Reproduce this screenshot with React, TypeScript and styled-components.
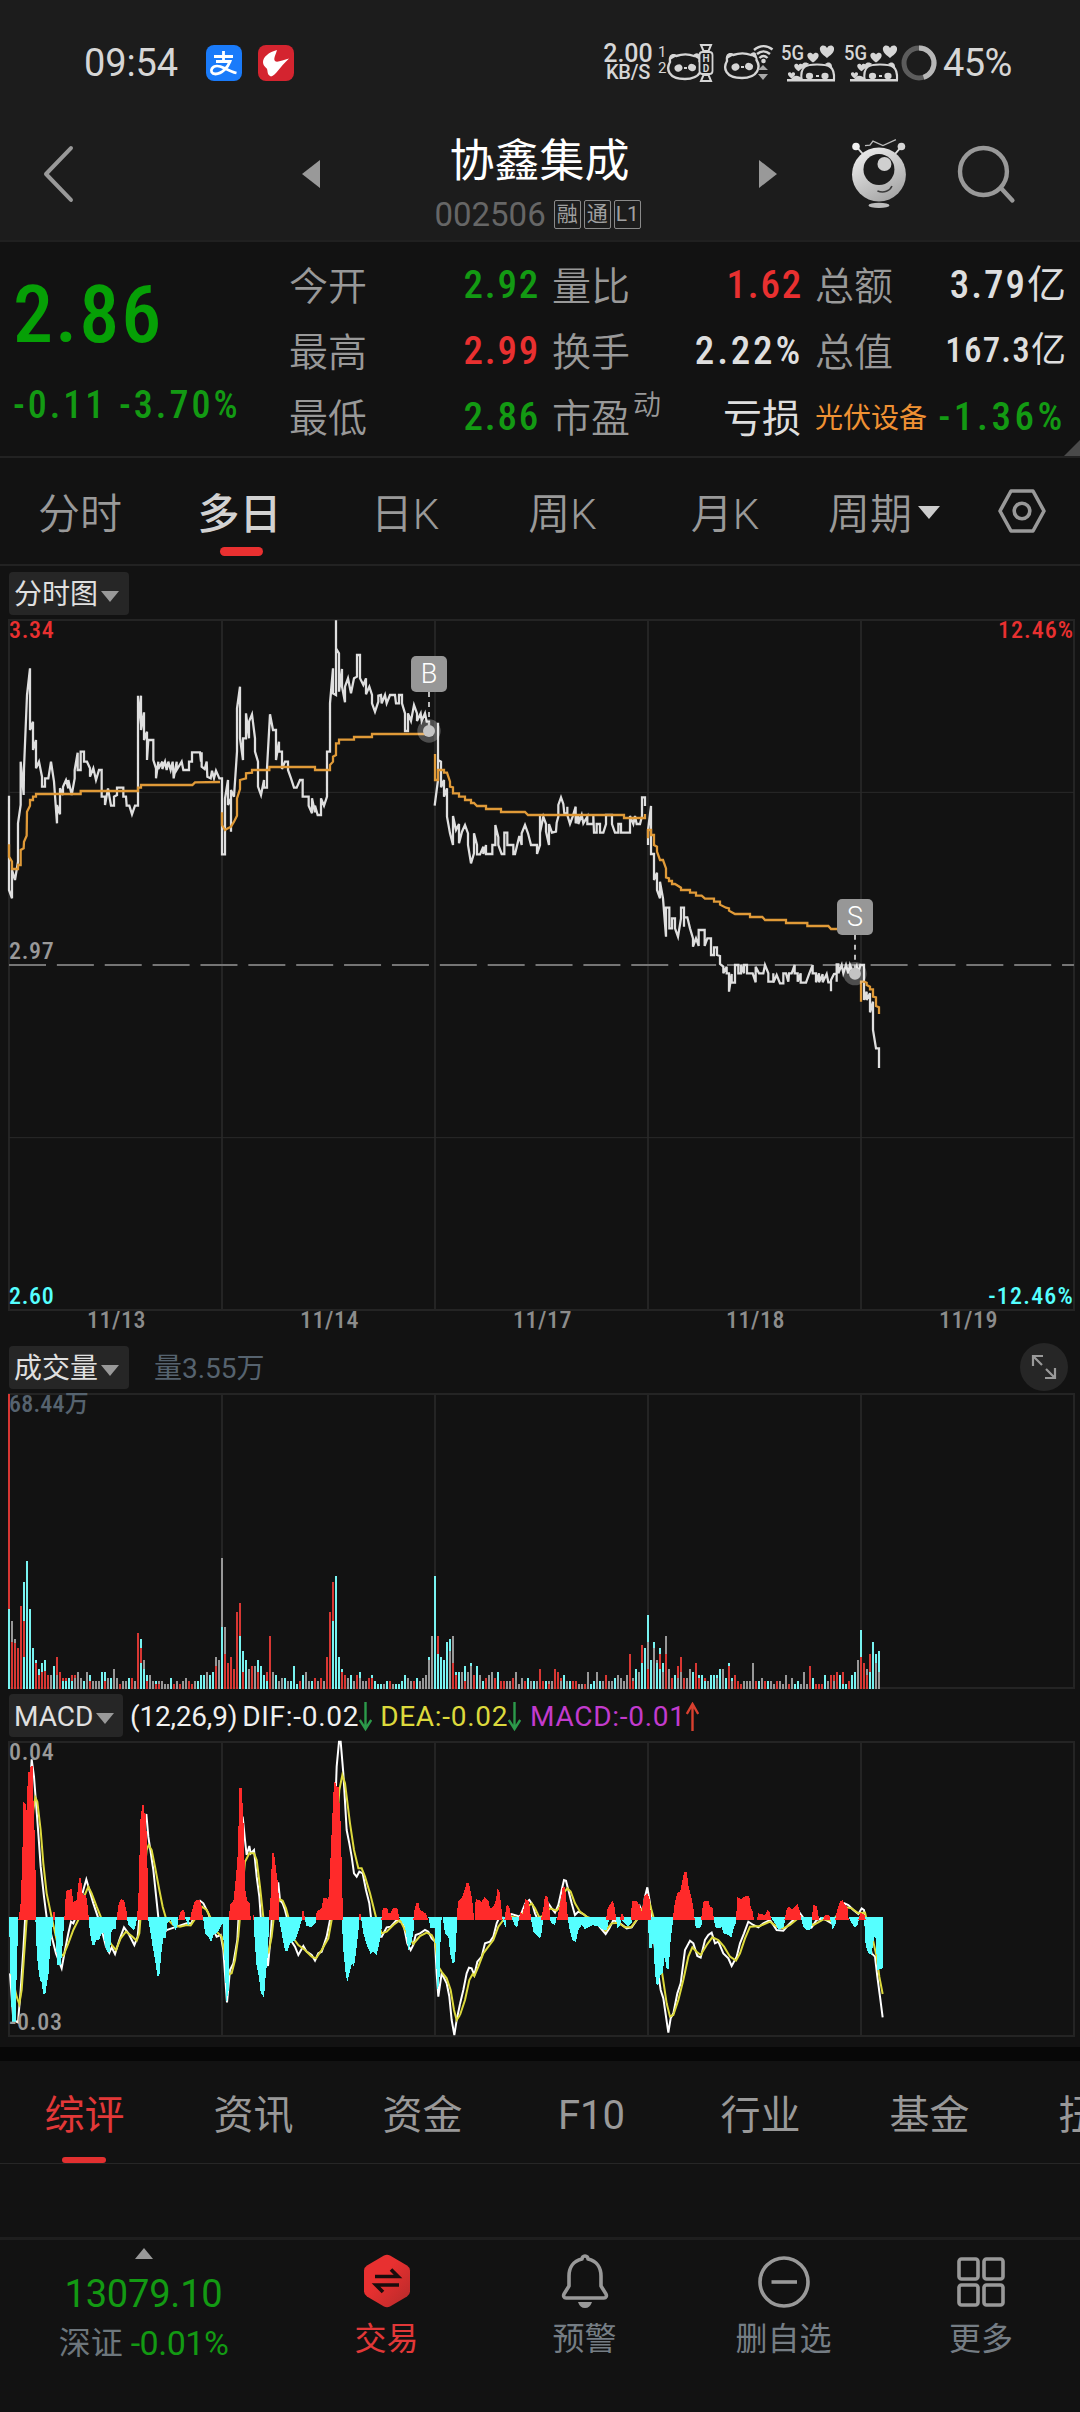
import styled, { createGlobalStyle } from 'styled-components';

const GlobalStyle = createGlobalStyle`
  * {
    box-sizing: border-box;
  }

  body {
    margin: 0;
    background: #121212;
    font-family: Roboto, "Noto Sans CJK SC", sans-serif;
  }
`;

const COLORS = {
  up: '#e93030',
  down: '#139a13',
  plain: '#dedede',
  muted: '#999999',
  slate: '#56636f',
  cyan: '#55ffff',
  grid: '#242424',
  average: '#e09a38',
};

const Screen = styled.div`
  width: 1080px;
  height: 2412px;
  overflow: hidden;
  background: #121212;
  color: ${COLORS.muted};
`;

/* ---------- status bar ---------- */

const StatusBar = styled.div`
  display: flex;
  align-items: center;
  height: 124px;
  padding: 1px 67px 0 84px;
  background: #1c1c1c;
  color: #d6d6d6;
`;

const Clock = styled.span`
  width: 122px;
  font-size: 38px;
  line-height: 50px;
  letter-spacing: -0.1px;
`;

const AppIcons = styled.div`
  display: flex;
  gap: 16px;
`;

const StatusIcons = styled.div`
  display: flex;
  align-items: center;
  margin-left: auto;

  > svg {
    flex: none;
    overflow: visible;
  }
`;

const NetSpeed = styled.div`
  width: 52px;
  font-size: 25px;
  font-weight: 500;
  line-height: 19px;
  text-align: center;

  > small {
    display: block;
    font-size: 20px;
    line-height: 18px;
    letter-spacing: -0.3px;
  }
`;

const Battery = styled.span`
  margin-left: 6px;
  width: 70px;
  font-size: 38px;
  line-height: 48px;
  letter-spacing: -0.6px;
`;

/* ---------- title bar ---------- */

const TitleBar = styled.header`
  display: flex;
  align-items: center;
  height: 118px;
  padding: 0 63px 16px 42px;
  background: #1c1c1c;
  border-bottom: 2px solid #202020;
`;

const TitleBlock = styled.div`
  display: flex;
  flex-direction: column;
  align-items: center;
  width: 440px;
  padding-top: 27px;
`;

const StockName = styled.h1`
  margin: 0;
  color: #fff;
  font-size: 45px;
  font-weight: 400;
  line-height: 54px;
`;

const StockMeta = styled.div`
  display: flex;
  align-items: center;
  gap: 3px;
  height: 52px;
  padding-right: 4px;
  color: #666;
  font-size: 33px;
  line-height: 40px;

  > b {
    margin-right: 5px;
    font-weight: 400;
  }
`;

const MetaBadge = styled.span`
  display: flex;
  align-items: center;
  justify-content: center;
  width: 27px;
  height: 29px;
  border: 1px solid #8a8a8a;
  border-radius: 2px;
  color: #a0a0a0;
  font-size: 21px;
  line-height: 27px;
`;

const Spacer = styled.div<{ $width: number }>`
  flex: none;
  width: ${({ $width }) => $width}px;
`;

/* ---------- quote ---------- */

const Quote = styled.section`
  position: relative;
  display: flex;
  height: 216px;
  border-bottom: 2px solid #222;
`;

const PriceBlock = styled.div`
  width: 289px;
  padding: 32px 0 0 13px;
`;

const Price = styled.div`
  color: #06a006;
  font-size: 80px;
  font-weight: 500;
  font-stretch: 75%;
  line-height: 82px;
  letter-spacing: 2px;
`;

const Change = styled.div`
  margin-top: 27px;
  color: ${COLORS.down};
  font-size: 38px;
  font-weight: 500;
  font-stretch: 75%;
  line-height: 44px;
  letter-spacing: 3px;
  white-space: nowrap;
`;

const QuoteGrid = styled.div`
  display: grid;
  grid-template-columns: repeat(3, 249px);
  grid-auto-rows: 66px;
  column-gap: 14px;
  padding-top: 12px;
`;

const QuoteCell = styled.div`
  display: flex;
  align-items: center;
  justify-content: space-between;
  line-height: 60px;
  white-space: nowrap;
`;

const QuoteLabel = styled.span<{ $sector?: boolean }>`
  color: ${({ $sector }) => ($sector ? '#ef9133' : COLORS.muted)};
  font-size: ${({ $sector }) => ($sector ? 28 : 39)}px;
  font-weight: ${({ $sector }) => ($sector ? 400 : 350)};

  > sup {
    position: relative;
    top: -3px;
    left: 3px;
    font-size: 28px;
    line-height: 0;
    vertical-align: 14px;
  }
`;

const QuoteValue = styled.span<{ $color: string; $small?: boolean; $text?: boolean; $spacing: number }>`
  margin-right: ${({ $text }) => ($text ? 0 : -2)}px;
  margin-bottom: ${({ $text }) => ($text ? 0 : 5)}px;
  color: ${({ $color }) => $color};
  font-size: ${({ $small }) => ($small ? 35 : 39)}px;
  font-weight: 500;
  font-stretch: 75%;
  letter-spacing: ${({ $spacing }) => $spacing}px;

  > i {
    font-style: normal;
    font-weight: 400;
    letter-spacing: 0;
  }
`;

const Corner = styled.div`
  position: absolute;
  right: 0;
  bottom: 0;
  border: 8px solid transparent;
  border-right-color: #4a4a4a;
  border-bottom-color: #4a4a4a;
`;

/* ---------- period tabs ---------- */

const PeriodTabs = styled.nav`
  display: grid;
  grid-template-columns: 160px 159px 172px 143px 182px 136px 128px;
  height: 108px;
  border-bottom: 2px solid #222;
`;

const PeriodTab = styled.div<{ $active?: boolean }>`
  position: relative;
  display: flex;
  align-items: center;
  justify-content: center;
  gap: 6px;
  padding-top: 8px;
  color: ${({ $active }) => ($active ? '#d2d2d2' : COLORS.muted)};
  font-size: 42px;
  font-weight: ${({ $active }) => ($active ? 500 : 350)};
  line-height: 60px;
  white-space: nowrap;

  &::after {
    content: ${({ $active }) => ($active ? "''" : 'none')};
    position: absolute;
    bottom: 8px;
    left: 60px;
    width: 43px;
    height: 9px;
    border-radius: 5px;
    background: #e93030;
  }
`;

const Caret = styled.span<{ $color?: string; $size?: number }>`
  width: 0;
  height: 0;
  margin-bottom: ${({ $size }) => ($size ? 6 : -3)}px;
  border: ${({ $size = 9 }) => $size}px solid transparent;
  border-top: ${({ $size = 9 }) => $size + 2}px solid ${({ $color = '#999' }) => $color};
  border-bottom: 0;
`;

const SettingsCell = styled.div`
  display: flex;
  align-items: center;
  justify-content: center;
  padding-left: 12px;
`;

/* ---------- charts ---------- */

const ChartHeader = styled.div<{ $height: number; $top: number }>`
  display: flex;
  align-items: flex-start;
  height: ${({ $height }) => $height}px;
  padding: ${({ $top }) => $top}px 12px 0 9px;
`;

const Chip = styled.div<{ $width: number }>`
  display: flex;
  align-items: center;
  gap: 3px;
  width: ${({ $width }) => $width}px;
  height: 43px;
  padding: 3px 0 0 5px;
  border-radius: 4px;
  background: #262626;
  color: #e0e0e0;
  font-size: 28px;
  line-height: 42px;
  white-space: nowrap;
`;

const VolumeText = styled.span`
  margin-left: 25px;
  color: ${COLORS.slate};
  font-size: 28px;
  line-height: 46px;
`;

const ExpandButton = styled.div`
  display: flex;
  align-items: center;
  justify-content: center;
  width: 48px;
  height: 48px;
  margin: -3px 0 0 auto;
  border-radius: 50%;
  background: #262626;
`;

const Plot = styled.div<{ $height: number }>`
  position: relative;
  width: 1065px;
  height: ${({ $height }) => $height}px;
  margin-left: 9px;

  > svg {
    display: block;
    overflow: visible;
  }
`;

const AxisLabel = styled.span<{ $top: number; $right?: boolean; $color: string; $spacing?: number }>`
  position: absolute;
  top: ${({ $top }) => $top}px;
  ${({ $right }) => ($right ? 'right: 0;' : 'left: 0;')}
  color: ${({ $color }) => $color};
  font-size: 24px;
  font-weight: 500;
  font-stretch: 75%;
  letter-spacing: ${({ $spacing = 0.7 }) => $spacing}px;
  line-height: 20px;
  white-space: nowrap;
`;

const TradeMark = styled.div<{ $x: number; $y: number }>`
  position: absolute;
  left: ${({ $x }) => $x - 18}px;
  top: ${({ $y }) => $y}px;
  width: 36px;
  height: 36px;
  border-radius: 5px;
  background: #979797;
  color: #fff;
  font-size: 27px;
  font-weight: 300;
  line-height: 36px;
  text-align: center;
`;

const Dates = styled.div`
  display: grid;
  grid-template-columns: repeat(5, 213px);
  height: 30px;
  padding-left: 10px;
  color: #8c8c8c;
  font-size: 24px;
  font-weight: 500;
  font-stretch: 75%;
  letter-spacing: 0.5px;
  line-height: 20px;
  text-align: center;
`;

const Indicator = styled.span<{ $color: string; $gap: number; $spacing?: number }>`
  display: flex;
  align-items: center;
  margin-left: ${({ $gap }) => $gap}px;
  color: ${({ $color }) => $color};
  font-size: 28px;
  line-height: 45px;
  letter-spacing: ${({ $spacing = 0 }) => $spacing}px;
  white-space: nowrap;
`;

const Gap = styled.div`
  height: 14px;
  margin-top: 11px;
  background: #070707;
`;

/* ---------- bottom ---------- */

const InfoTabs = styled.nav`
  display: grid;
  grid-template-columns: repeat(7, 169px);
  width: 1080px;
  height: 103px;
  overflow: hidden;
  border-bottom: 1px solid #262626;
`;

const InfoTab = styled.div<{ $active?: boolean }>`
  position: relative;
  width: 169px;
  padding-top: 23px;
  color: ${({ $active }) => ($active ? '#e23838' : COLORS.muted)};
  font-size: 40px;
  font-weight: 400;
  line-height: 64px;
  text-align: center;

  &::after {
    content: ${({ $active }) => ($active ? "''" : 'none')};
    position: absolute;
    bottom: 0;
    left: 62px;
    width: 44px;
    height: 6px;
    border-radius: 3px;
    background: #e23030;
  }
`;

const Blank = styled.div`
  height: 73px;
`;

const BottomBar = styled.footer`
  display: grid;
  grid-template-columns: 287px 199px 197px 201px 194px;
  height: 175px;
  border-top: 3px solid #1e1e1e;
`;

const IndexBlock = styled.div`
  display: flex;
  flex-direction: column;
  align-items: center;
  padding-top: 8px;
`;

const CaretUp = styled.span`
  border: 9px solid transparent;
  border-top: 0;
  border-bottom: 11px solid #999;
`;

const IndexValue = styled.div`
  margin-top: 13px;
  color: #139a13;
  font-size: 38px;
  line-height: 44px;
  letter-spacing: -0.2px;
`;

const IndexChange = styled.div`
  display: flex;
  gap: 8px;
  color: #6d767c;
  font-size: 32px;
  line-height: 54px;

  > b {
    color: #139a13;
    font-size: 34px;
    font-weight: 400;
    letter-spacing: -0.5px;
  }
`;

const Action = styled.div<{ $active?: boolean }>`
  display: flex;
  flex-direction: column;
  align-items: center;
  padding-top: 14px;
  color: ${({ $active }) => ($active ? '#e23838' : '#757d84')};
  font-size: 32px;
  line-height: 54px;

  > svg {
    margin-bottom: 4px;
  }
`;

/* ---------- series ---------- */

type Segment = { dx: number; dy: number; points: string };

// plot units: three per pixel
const UNIT = 3;

const priceSegments: Segment[] = [
  {
    dx: -27,
    dy: -165,
    points:
      '27,692 27,975 36,1000 36,915 45,945 54,890 54,775 62,720 62,590 71,690 72,610 81,390 90,310 90,495 99,470 99,555 108,525 108,610 117,590 126,635 126,665 135,665 135,640 145,640 153,590 162,650 171,775 171,720 180,748 180,670 189,690 189,665 198,645 205,670 205,645 215,690 224,640 224,615 233,563 233,615 242,615 242,560 252,560 252,590 261,590 270,610 270,635 280,610 288,645 297,615 305,615 305,695 315,695 315,720 324,670 333,722 342,722 342,695 351,690 351,668 370,668 370,695 378,695 380,722 388,722 396,748 405,722 414,722 414,392 414,480 423,392 423,495 432,442 432,525 441,500 441,585 445,525 460,525 460,585 468,610 468,640 475,590 475,612 487,590 487,612 495,590 500,615 505,590 512,615 518,590 521,640 530,590 530,615 545,590 550,615 567,615 567,590 576,590 576,562 600,562 603,590 605,562 605,605 614,612 620,590 622,635 632,640 636,617 642,640 648,617 658,640 666,640 666,868 675,868 675,700 684,645 684,720 693,700 693,800 693,675 702,695 711,560 711,430 720,365 720,520 729,585 729,520 738,520 738,445 747,520 747,470 756,448 765,520 765,560 774,590 774,665 783,690 792,645 792,668 801,668 801,610 810,448 819,495 828,495 828,585 837,530 837,560 846,560 846,612 855,590 864,590 864,615 873,640 882,668 890,668 900,645 908,645 908,695 926,695 926,722 936,745 936,700 945,742 945,722 953,750 963,750 963,700 972,722 981,695 981,560 990,560 990,415 999,310 999,385 1008,390 1008,166 1008,250 1017,265 1017,380 1026,312 1026,365 1035,412 1035,365 1044,340 1053,385 1062,340 1071,335 1071,270 1080,270 1080,340 1090,360 1098,340 1098,388 1108,365 1116,390 1116,415 1125,440 1135,410 1135,392 1143,390 1145,415 1155,390 1160,415 1170,390 1185,390 1188,415 1197,415 1197,390 1206,390 1206,415 1215,445 1215,498 1224,498 1224,445 1233,468 1242,420 1251,445 1251,468 1262,445 1265,468 1275,445 1280,470 1287,470 1287,495',
  },
  {
    dx: 873,
    dy: -60,
    points:
      '404,617 414,540 414,368 414,480 423,485 423,562 432,540 432,590 441,565 441,650 450,700 459,735 459,648 468,690 477,672 477,730 486,695 495,675 504,700 504,735 513,790 522,760 522,700 531,735 531,763 540,763 550,740 550,762 558,735 558,762 577,762 577,735 586,735 586,675 595,712 595,735 605,762 613,762 613,698 622,698 622,735 640,735 640,762 645,762 658,708 665,735 665,700 675,675 684,700 693,735 711,735 711,762 720,735 720,648 720,698 730,650 738,672 738,695 747,735 747,672 756,698 768,695 770,668 775,650 775,615 783,592 790,612 793,640 802,640 802,620 802,645 810,672 818,650 827,620 827,670 835,645 835,672 845,645 850,670 862,650 862,672 880,672 880,648 882,698 890,698 890,672 900,672 900,698 910,698 918,672 918,645 936,645 936,672 945,698 955,698 955,672 963,672 963,698 990,698 990,648 1000,672 1005,648 1010,672 1020,672 1026,648 1026,592 1035,592 1035,618',
  },
  {
    dx: 1833,
    dy: 480,
    points:
      '84,195 84,150 93,78 93,222 102,222 102,300 111,278 111,330 120,355 120,305 129,355 138,470 138,383 148,383 148,445 156,445 156,415 165,415 165,445 174,470 183,415 183,383 192,383 192,440 192,412 202,412 210,445 219,475 219,500 228,475 236,498 236,450 254,450 254,498 262,475 273,475 273,525 282,525 282,502 291,502 291,525 300,528 300,552 310,560 310,580 320,560 320,580 327,580 327,635 335,582 335,608 345,608 345,555 355,555 355,580 363,580 363,555 372,580 372,555 381,555 381,580 398,580 407,607 407,560 417,580 430,580 435,555 445,580 445,605 460,605 460,580 460,608 470,585 480,610 490,610 490,580 498,580 505,605 507,580 515,580 524,555 524,580 533,580 533,605 542,580 542,608 558,608 568,580 578,555 578,580 588,580 588,607 597,580 597,607 608,583 608,607 620,582 625,607 633,607 633,634 633,600 642,582 650,580 650,605 650,553 655,553 655,580 665,555 670,580 678,555 685,580 690,555 700,580 710,558 715,580 721,555 732,555 732,660 740,635 740,660 750,640 750,697 759,665 759,750 768,805 777,805 777,864',
  },
];

const averageSegments: Segment[] = [
  {
    dx: -27,
    dy: -165,
    points:
      '27,838 27,875 36,890 36,912 54,912 54,900 62,900 62,855 71,850 72,830 80,812 81,740 90,722 90,705 99,705 99,695 108,695 108,687 242,687 242,678 414,678 414,668 423,668 423,660 577,660 585,652 660,651',
  },
  {
    dx: -27,
    dy: -165,
    points:
      '666,742 666,780 675,795 684,790 693,785 702,770 711,752 711,700 720,672 720,645 738,640 738,625 756,623 756,615 808,615 808,606 945,606 945,615 990,615 990,600 999,590 999,575 1008,570 1008,535 1017,535 1017,524 1062,524 1062,516 1116,516 1116,507 1287,507',
  },
  {
    dx: 873,
    dy: -60,
    points:
      '405,462 405,540 414,540 414,510 432,510 432,518 441,518 450,545 450,560 459,562 459,580 477,580 477,590 495,590 495,600 513,600 513,609 522,609 531,618 558,618 558,627 603,627 603,636 675,636 684,645 972,645 972,654 1035,654 1035,642',
  },
  {
    dx: 1833,
    dy: 480,
    points:
      '84,175 84,150 93,150 93,165 102,165 102,195 111,200 111,215 120,240 129,240 138,265 138,292 147,295 147,303 156,303 156,312 165,312 183,323 183,330 210,330 210,338 228,338 228,347 245,347 255,356 282,356 282,365 300,365 300,374 318,383 327,385 327,392 345,402 390,402 390,411 427,411 435,420 498,420 498,429 562,429 562,438 625,438 633,447 652,447',
  },
  {
    dx: 1833,
    dy: 480,
    points: '723,665 723,605 732,605 740,608 740,615 750,620 750,628 759,628 759,650 768,652 768,678 777,682 777,702',
  },
];

// one token per bar, tallest layer first: r = up, c = down, g = flat
const volumeBars =
  'r295c80 g68r47 g50r46 r41 r83 c107r68c32 c128 c80 c41 c29r26 c20r14 c26r17 c29r18 r14 g14 c23 r32g14 r17 r11c8 r11c8 c11 r14c8 r14g11 g17 g11 c8 g17 c14r8 g8 g8 g8 c17 c17r8 g11 c11 g20 g11 r5 g8 g8 c11 r11 g8 r56 c50r41c26 g29c20 c14r8 g14 g8 c8r5 g8r5 g8 g5 g5 c11 r5 g8 r5 g8 g11 r8 r5 g8 c8 c14 c14 g17 c14 c17 g32r23 g29 g131c62 g62r35 r26 r32 r20 r77 r86c53 c38r17 c29 g20 r23 g23 c29r17 c23 c14 r17c8 r53 g17 c14 g8 g11 c11 g8 c8 c23 c5 r8 c14 g17 g8 c8 r11 g8 r11 g8 r32 r77 r107c68 c113 c32 c20r17 r14 g11 c14 g8 r14 c17g11 g8 g8 r11 c14r11 c8 c5 c5 g5 c8 r8 g5 c5 c5 c8 c14 g11 g8 r8 c11 g8 g11 g14 c32g29 g53 c113 r53c35 c32 c29 c47 c50g38 g53r26 c17r14 c17 g17 c23r8 g17 c26g23 r14 c23 g14 c8 r11 g14 g17 r11 c17 r8 r8 g8 g8 r11 g17 g5 g11 r8 c11 g8 c8 g8 r20 r8 c8 g8r5 g8 r20 r17 r11g8 c14 g8 c8 r8 r8 g5 g5 r5 g17 c5 c8 g17 c8 g8 r14 g8 g8 c11 g14 g11 g8 g14 r35 g11r8 c20 g17 r44c26 c41 c74g47r20 c29 c47g41 g29c26 c41r35c20 c26g17 g53r35 g20 r11 c14 r23g11 r32g17 r11 g11 g20 c17 r26 c14r11 c14 r11c8 g8 c14 c14 c14g11 c20 g20 c11 c26r23 c11g8 r14 r8 r5 g8 g8 g8 g26 r8 c8 g11 r8 c8 g8 g5 r8 g8 g5 g14 r5 g11 c5 c8 g5 g17 g5 r23 c11 r5 r5 r5 c14 g8 r14 r14g8 r17 c14 r17c5 c5 r8 c14 c17 g29 c59r32 r26 g20r14 r35c17 c47 c35g26 c38g17';

const volumeColors: Record<string, string> = { r: '#d83733', c: '#78f3f1', g: '#989898' };

const positive: Segment[] = [
  {
    dx: -27,
    dy: -156,
    points:
      '55,690 62,640 67,500 70,335 76,340 80,362 84,245 90,245 92,228 98,228 100,320 103,400 108,600 108,690 160,690 160,666 165,666 165,690 193,690 195,640 200,600 215,598 220,635 230,630 237,565 243,565 248,615 258,615 265,660 266,690 350,690 355,645 362,628 372,630 380,665 382,690 411,690 416,600 421,390 427,345 432,345 433,370 438,372 442,500 445,690 535,690 540,670 546,660 553,662 556,690 570,690 575,665 582,640 588,630 600,630 605,650 609,690 686,690 690,645 700,635 708,560 714,480 718,295 725,295 730,380 736,600 741,632 750,640 752,690 758,690 758,675 762,675 762,690 806,690 812,620 816,488 822,490 835,590 838,690 905,690 908,660 913,665 914,690 947,690 950,665 965,655 970,625 978,622 985,630 990,540 996,400 1002,277 1007,278 1010,290 1016,292 1022,400 1027,600 1029,690 1078,690 1078,672 1083,672 1083,690 1144,690 1148,655 1162,655 1165,668 1172,668 1178,655 1192,655 1196,675 1197,690 1240,690 1244,655 1250,637 1256,640 1260,660 1278,670 1285,690',
  },
  {
    dx: 1293,
    dy: -156,
    points:
      '50,690 54,635 65,625 72,605 80,578 87,580 95,620 100,660 102,690 104,690 107,628 118,630 125,635 133,622 145,632 150,655 160,650 168,630 172,598 178,600 184,650 187,690 193,690 200,645 207,648 212,670 217,690 237,690 240,665 248,672 256,628 265,630 270,655 273,690 303,690 310,655 315,617 322,618 328,650 330,690 350,690 355,670 362,630 368,592 375,592 380,640 384,690 498,690 503,655 512,640 518,632 525,655 528,690 540,690 543,672 550,672 552,690 572,690 576,632 590,632 598,645 605,665 612,620 622,610 630,630 633,690 698,690 704,640 712,608 720,605 726,580 732,545 740,545 746,590 754,620 762,665 764,690 783,690 790,635 805,632 810,650 817,650 822,690 888,690 892,622 905,628 912,620 928,618 932,650 938,665 942,690 950,690 955,670 975,675 982,660 990,668 993,690 1033,690 1040,658 1048,650 1056,660 1065,650 1072,640 1080,665 1084,690 1115,690 1120,645 1130,648 1136,680 1137,690 1150,690 1155,675 1168,675 1170,690 1185,690 1192,658 1200,635 1208,630 1215,645 1222,650 1226,690 1255,690 1262,668 1275,675 1277,690',
  },
];

const negative: Segment[] = [
  {
    dx: -27,
    dy: -156,
    points:
      '27,682 30,800 34,935 36,997 47,997 50,850 55,690 55,682 106,682 110,780 114,830 120,870 127,880 128,913 136,913 140,885 146,850 150,780 155,740 160,682 163,682 168,760 172,825 182,825 186,790 192,700 194,682 266,682 270,730 277,765 283,765 290,750 297,750 303,735 310,725 315,765 322,787 330,787 335,720 348,715 350,682 380,682 385,705 395,715 402,722 408,705 411,682 444,682 450,720 458,770 466,815 472,858 478,858 484,790 490,745 497,745 502,700 512,690 518,705 527,720 533,705 535,682 555,682 560,695 565,708 570,682 609,682 615,730 625,740 633,757 640,735 655,725 665,705 668,700 674,820 679,935 686,900 688,690 688,682 760,682 766,780 770,830 777,860 782,908 792,922 797,860 803,800 808,682 836,682 845,730 855,783 863,783 870,760 885,752 895,725 905,690 905,682 912,682 920,708 935,712 947,700 948,682 1025,682 1030,780 1038,860 1043,875 1048,850 1056,820 1062,832 1070,770 1078,700 1079,682 1083,682 1090,730 1100,765 1112,792 1120,785 1130,795 1138,760 1144,730 1146,682 1197,682 1215,710 1225,780 1235,755 1242,715 1243,682 1285,682 1292,715 1305,715 1308,800 1312,900 1318,880 1322,740 1325,682 1328,682 1335,730 1345,740 1352,800 1358,820 1365,815 1370,720 1372,682',
  },
  {
    dx: 1293,
    dy: -156,
    points:
      '187,682 192,700 197,712 200,682 215,682 225,708 232,712 238,682 272,682 280,725 290,735 298,745 303,740 308,700 309,682 327,682 335,700 345,705 350,682 383,682 390,725 398,752 408,755 415,720 425,705 435,718 445,712 458,705 475,710 490,720 500,720 505,700 508,682 527,682 533,715 540,705 545,690 565,710 575,700 577,682 624,682 627,775 635,775 640,750 645,850 650,885 655,885 660,855 668,850 674,800 680,838 686,838 692,750 698,700 699,682 762,682 768,715 780,715 787,700 788,682 819,682 828,715 845,712 850,730 865,735 875,742 882,710 888,700 889,682 993,682 1005,700 1015,720 1030,712 1036,690 1036,682 1083,682 1090,712 1100,722 1112,718 1117,700 1118,682 1140,682 1145,692 1150,682 1170,682 1178,718 1188,700 1190,682 1226,682 1235,700 1245,712 1253,705 1258,682 1272,682 1277,765 1285,790 1295,795 1302,740 1307,745 1312,840 1328,835 1330,682',
  },
];

const dif: Segment[] = [
  {
    dx: -27,
    dy: -156,
    points:
      '30,850 40,990 54,997 62,900 70,780 78,640 84,400 95,208 102,260 115,430 122,530 132,620 140,682 150,720 168,790 185,835 195,780 205,730 213,695 220,700 235,660 250,600 259,568 268,600 280,640 290,670 300,700 318,770 328,788 335,772 345,792 358,750 372,712 385,730 403,765 413,740 425,600 433,400 439,372 445,440 460,540 475,682 485,740 500,720 530,710 560,700 575,700 590,640 600,632 610,640 625,670 640,720 650,740 662,735 670,780 681,937 690,840 700,820 712,750 720,600 728,380 735,450 740,495 748,468 752,490 762,480 770,560 778,620 783,690 790,800 800,800 804,828 812,740 818,640 825,580 835,580 840,630 848,640 855,660 865,700 875,755 885,770 895,795 910,768 920,785 935,795 945,812 955,790 965,785 980,740 990,690 1000,520 1010,230 1017,155 1022,155 1030,250 1040,420 1048,460 1055,500 1062,550 1070,560 1078,545 1088,550 1098,600 1108,640 1113,682 1125,740 1145,740 1160,712 1172,710 1190,690 1210,700 1222,760 1232,780 1240,765 1247,735 1260,730 1275,720 1285,725 1295,745 1305,755 1310,850 1315,920 1325,850 1340,880 1348,920 1355,990 1363,1035 1370,990 1380,942',
  },
  {
    dx: 1293,
    dy: -156,
    points:
      '60,942 70,900 80,850 87,833 95,835 103,855 112,815 125,800 135,760 150,755 160,740 170,700 178,682 200,685 215,672 240,680 256,640 268,630 278,645 285,670 298,700 310,680 325,640 335,655 345,668 355,645 365,600 372,570 378,572 385,600 395,640 405,675 415,665 430,672 445,685 465,690 480,712 497,732 508,715 520,690 540,700 560,715 575,712 590,690 600,650 608,670 615,620 622,592 630,640 638,720 650,820 662,900 670,925 685,1028 692,985 700,970 712,910 722,880 735,780 750,752 760,760 772,798 782,803 795,750 805,735 815,728 825,760 835,755 850,790 865,805 875,828 890,800 900,760 912,730 925,695 940,705 955,712 970,700 990,690 1010,720 1030,722 1045,705 1060,690 1080,670 1095,690 1115,712 1130,690 1150,685 1175,700 1195,670 1213,640 1225,645 1240,660 1255,672 1265,655 1272,660 1280,730 1295,790 1305,800 1312,860 1320,920 1328,982',
  },
];

const dea: Segment[] = [
  {
    dx: -27,
    dy: -156,
    points:
      '34,850 50,920 58,942 65,900 72,800 80,690 90,520 100,360 106,322 112,335 122,420 130,520 140,610 155,682 170,750 180,790 190,797 205,760 220,720 235,690 250,625 265,590 275,610 290,650 303,682 320,740 335,765 348,780 362,745 378,725 395,738 410,752 418,730 428,600 440,480 446,465 455,480 465,530 478,600 488,650 497,682 520,705 540,710 560,705 572,706 590,680 606,650 620,660 635,690 650,725 665,740 675,800 687,853 695,850 705,810 715,740 725,620 735,515 748,490 762,490 770,510 780,590 790,682 798,760 805,790 815,740 825,650 840,628 848,632 858,655 870,700 880,745 895,765 915,780 935,800 948,805 965,780 985,745 995,690 1005,500 1018,300 1027,255 1035,280 1050,400 1062,480 1075,535 1085,535 1095,560 1110,610 1128,682 1145,730 1160,725 1180,705 1200,690 1220,730 1240,762 1260,738 1280,728 1295,735 1305,755 1315,830 1326,847 1340,865 1352,900 1362,960 1370,990 1380,975',
  },
  {
    dx: 1293,
    dy: -156,
    points:
      '60,975 75,930 88,870 98,852 103,858 115,830 130,790 145,770 160,750 175,710 190,690 215,680 240,685 262,650 275,640 285,655 298,682 315,675 330,655 350,662 360,650 370,610 382,595 392,605 405,640 420,665 440,680 460,688 480,705 497,722 515,700 535,698 555,712 573,712 590,690 605,660 625,625 640,680 655,780 668,860 680,940 690,980 700,975 715,930 730,870 745,800 757,772 770,785 782,795 800,765 817,742 835,750 852,770 870,800 888,812 900,790 915,745 930,710 960,708 990,695 1010,710 1030,715 1050,705 1080,680 1100,695 1120,705 1150,688 1175,692 1200,670 1220,652 1235,655 1255,670 1275,668 1285,710 1300,755 1310,800 1318,860 1328,912',
  },
];

function Lines({ segments, color, width }: { segments: Segment[]; color: string; width: number }) {
  return (
    <>
      {segments.map(({ dx, dy, points }, i) => (
        <polyline
          key={i}
          points={points}
          transform={`translate(${dx} ${dy})`}
          fill="none"
          stroke={color}
          strokeWidth={width}
        />
      ))}
    </>
  );
}

function Areas({ segments, color }: { segments: Segment[]; color: string }) {
  return (
    <>
      {segments.map(({ dx, dy, points }, i) => (
        <polygon key={i} points={points} transform={`translate(${dx} ${dy})`} fill={color} shapeRendering="crispEdges" />
      ))}
    </>
  );
}

function Grid({ height }: { height: number }) {
  return (
    <g stroke={COLORS.grid} strokeWidth={6} fill="none">
      <rect x={0} y={0} width={3195} height={height * UNIT} />
      {[639, 1278, 1917, 2556].map((x) => (
        <path key={x} d={`M${x} 0V${height * UNIT}`} />
      ))}
    </g>
  );
}

function PriceChart() {
  return (
    <Plot $height={690}>
      <svg width={1065} height={690} viewBox="0 0 3195 2070">
        <Grid height={690} />
        <path d="M0 517H3195M0 1553H3195" stroke="#2a2a2a" strokeWidth={3} />
        <path d="M0 1035H3195" stroke="#757575" strokeWidth={6} strokeDasharray="111 32.6" />
        <Lines segments={priceSegments} color="#dfdfdf" width={6.8} />
        <Lines segments={averageSegments} color={COLORS.average} width={6.8} />
        {[
          [1260, 333],
          [2538, 1061],
        ].map(([x, y]) => (
          <g key={x}>
            <path d={`M${x} ${y - 117}V${y}`} stroke="#bbb" strokeWidth={6} strokeDasharray="15 15" />
            <circle cx={x} cy={y} r={35} fill="#fff" opacity={0.25} />
            <circle cx={x} cy={y} r={18} fill="#c4c4c4" />
          </g>
        ))}
      </svg>
      <AxisLabel $top={0} $color={COLORS.up}>3.34</AxisLabel>
      <AxisLabel $top={0} $color={COLORS.up} $right $spacing={1}>12.46%</AxisLabel>
      <AxisLabel $top={321} $color="#999">2.97</AxisLabel>
      <AxisLabel $top={666} $color={COLORS.cyan}>2.60</AxisLabel>
      <AxisLabel $top={666} $color={COLORS.cyan} $right $spacing={1.2}>-12.46%</AxisLabel>
      <TradeMark $x={420} $y={36}>B</TradeMark>
      <TradeMark $x={846} $y={279}>S</TradeMark>
    </Plot>
  );
}

function VolumeChart() {
  return (
    <Plot $height={294}>
      <svg width={1065} height={294} viewBox="0 0 3195 882">
        <Grid height={294} />
        <g shapeRendering="crispEdges">
          {volumeBars.split(' ').map((bar, i) =>
            (bar.match(/[rcg]\d+/g) ?? []).map((layer, j) => {
              const h = Number(layer.slice(1)) * UNIT;
              return <rect key={`${i}-${j}`} x={i * 9 - 3} y={885 - h} width={6} height={h} fill={volumeColors[layer[0]]} />;
            }),
          )}
        </g>
      </svg>
      <AxisLabel $top={0} $color={COLORS.slate} $spacing={0.2}>68.44万</AxisLabel>
    </Plot>
  );
}

function MacdChart() {
  return (
    <Plot $height={294}>
      <svg width={1065} height={294} viewBox="0 0 3195 882">
        <Grid height={294} />
        <Lines segments={dif} color="#ffffff" width={6} />
        <Lines segments={dea} color="#dcd93c" width={6} />
        <Areas segments={negative} color="#55ffff" />
        <Areas segments={positive} color="#ff2a2a" />
      </svg>
      <AxisLabel $top={0} $color="#999">0.04</AxisLabel>
      <AxisLabel $top={270} $color="#999">-0.03</AxisLabel>
    </Plot>
  );
}

/* ---------- icons ---------- */

function TrendArrow({ up }: { up?: boolean }) {
  return (
    <svg width={13} height={30} viewBox="0 0 13 30" fill="none" stroke={up ? '#d8402f' : '#2c9a4a'} strokeWidth={2.4}>
      <path d={up ? 'M6.5 29V2M0.8 12L6.5 2L12.2 12' : 'M6.5 0V27M0.8 18L6.5 27L12.2 18'} />
    </svg>
  );
}

function AlipayIcon() {
  return (
    <svg width={36} height={36} viewBox="0 0 36 36">
      <rect width={36} height={36} rx={8} fill="#1a7bfa" />
      <path
        d="M8 11.5H27M17.5 6V16M10 16.5H24C22 22 16 29 9.500 29C5.500 29 4.500 26 6 23.500C8 20.500 13 20.500 18 23C23 25.500 26 27 30.500 28"
        fill="none"
        stroke="#fff"
        strokeWidth={2.8}
      />
    </svg>
  );
}

function BrokerIcon() {
  return (
    <svg width={36} height={36} viewBox="0 0 36 36">
      <rect width={36} height={36} rx={8} fill="#d4242f" />
      <path d="M19 5C11 7 5 12 5 17C5 21 8 22 9 24C10 27 9 30 13 31.500C18 30 21 23 31 13.500C25 15 19 18 17 16C15 14 18 9 19 5Z" fill="#fff" />
    </svg>
  );
}

function PandaHead() {
  return (
    <>
      <path d="M3 17C2 9 7 10 9 11C15 9 22 9 27 11C30 8 34 10 32.500 16C37 23 34 34 18 34C1 34 -1 24 3 17Z" fill="none" stroke="#d6d6d6" strokeWidth={2.4} />
      <path d="M3 15C3 8 8 8 10 11ZM26 11C29 7 34 9 33 15Z" fill="#d6d6d6" />
      <ellipse cx={11.5} cy={23} rx={4} ry={3.6} fill="#d6d6d6" transform="rotate(-25 11.500 23)" />
      <ellipse cx={25} cy={22.5} rx={4} ry={3.6} fill="#d6d6d6" transform="rotate(25 25 22.500)" />
      <rect x={17} y={22} width={3} height={2} fill="#d6d6d6" />
    </>
  );
}

function PandaHdIcon() {
  return (
    <svg width={58} height={38} viewBox="0 0 58 38">
      <g fill="#d6d6d6" fontFamily="Roboto" fontSize={15}>
        <text x={1} y={13}>1</text>
        <text x={1} y={29}>2</text>
      </g>
      <g transform="translate(10 1)">
        <PandaHead />
      </g>
      <path d="M44 1H54L51.500 7H46.500ZM44 37H54L51.500 31H46.500Z" fill="none" stroke="#d6d6d6" strokeWidth={2} />
      <rect x={42.500} y={8} width={13} height={22} rx={3} fill="#1c1c1c" stroke="#d6d6d6" strokeWidth={1.800} />
      <g fill="#d6d6d6" fontFamily="Roboto" fontSize={10} fontWeight={700} textAnchor="middle">
        <text x={49} y={18}>H</text>
        <text x={49} y={27.5}>D</text>
      </g>
    </svg>
  );
}

function PandaWifiIcon() {
  return (
    <svg width={50} height={38} viewBox="0 0 50 38">
      <PandaHead />
      <path d="M28 -2H50V16H34Z" fill="#1c1c1c" />
      <g fill="none" stroke="#d6d6d6" strokeWidth={2.4}>
        <path d="M30 6C36 1 43 1 48.500 5.500" />
        <path d="M33 10C37 6.500 42 6.500 46 10" />
        <path d="M35.500 14C38 11.500 41 11.500 43.500 14" />
      </g>
      <circle cx={39.5} cy={17} r={2.300} fill="#d6d6d6" />
      <path d="M34 26H44L39 21Z M34 30H44L39 36Z" fill="#a8a8a8" />
    </svg>
  );
}

const HEART = 'M0 -3C-2 -7 -8 -6 -7 -1C-6.500 2 -3 4.500 0 7C3 4.500 6.500 2 7 -1C8 -6 2 -7 0 -3Z';

function PandaSignalIcon() {
  return (
    <svg width={63} height={38} viewBox="0 0 63 38">
      <g fill="#d6d6d6">
        <text x={0} y={16} fontFamily="Roboto" fontSize={21} fontWeight={500} textLength={23} lengthAdjust="spacingAndGlyphs">
          5G
        </text>
        <path d={HEART} transform="translate(46 7)" />
        <path d={HEART} transform="translate(32 13) scale(0.800)" />
        <path d={HEART} transform="translate(17.500 23) scale(0.600)" />
        <path d={HEART} transform="translate(10.500 31) scale(0.500)" />
        <path d="M6 35H54V37.500H6Z M10 36C12 30 18 31 22 35Z" />
        <ellipse cx={28.5} cy={32} rx={3.600} ry={3.200} />
        <ellipse cx={44} cy={32} rx={3.600} ry={3.200} />
        <rect x={35} y={31} width={3} height={2} />
        <path d="M20 25C20 17 26 18 28 20ZM44 20C47 17 52 18 51 25Z" />
      </g>
      <path d="M20.500 36C19 22 25 20.500 36 20.500C48 20.500 54 22 53 36" fill="none" stroke="#d6d6d6" strokeWidth={2.200} />
    </svg>
  );
}

// the last signal glyph runs right up to the ring
const Ring = styled.svg`
  margin-left: -6px;
`;

function BatteryRing() {
  return (
    <Ring width={36} height={36} viewBox="0 0 36 36" fill="none" strokeWidth={5}>
      <circle cx={18} cy={18} r={15} stroke="#5c5c5c" />
      <path d="M18 3A15 15 0 0 1 22.600 32.300" stroke="#b8b8b8" />
    </Ring>
  );
}

function RobotIcon() {
  return (
    <svg width={56} height={72} viewBox="0 0 56 72">
      <defs>
        <linearGradient id="robot" x1="0" y1="0" x2="0.600" y2="1">
          <stop offset="0" stopColor="#f4f4f4" />
          <stop offset="1" stopColor="#a8a8a8" />
        </linearGradient>
      </defs>
      <path d="M5 8L12 16M51 8L44 16" stroke="#ddd" strokeWidth={1.800} />
      <circle cx={5} cy={8.500} r={3.800} fill="#f0f0f0" />
      <circle cx={50.500} cy={8.500} r={3.800} fill="#d6d6d6" />
      <path d="M14 7.500L19 7L22 3L32 7.500L45 1.500" fill="none" stroke="#bbb" strokeWidth={1.300} />
      <circle cx={28} cy={36.500} r={27} fill="url(#robot)" />
      <circle cx={28} cy={31.500} r={15.500} fill="#1c1c1c" />
      <circle cx={33.500} cy={26} r={7} fill="#cfcfcf" />
      <path d="M26.500 53C33 55.500 39 53 41 48" fill="none" stroke="#3a3a3a" strokeWidth={1.500} />
      <ellipse cx={28} cy={67.500} rx={10.500} ry={2.600} fill="#bdbdbd" />
    </svg>
  );
}

function TradeIcon() {
  return (
    <svg width={50} height={54} viewBox="0 0 50 54">
      <defs>
        <linearGradient id="trade" x1="0" y1="0" x2="1" y2="1">
          <stop offset="0.400" stopColor="#e83030" />
          <stop offset="1" stopColor="#b52a2a" />
        </linearGradient>
      </defs>
      <path d="M22 1.500Q25 0 28 1.500L45 11.500Q48 13.500 48 16.500V37.500Q48 40.500 45 42.500L28 52.500Q25 54 22 52.500L5 42.500Q2 40.500 2 37.500V16.500Q2 13.500 5 11.500Z" fill="url(#trade)" />
      <path d="M13 22.500H36L29 15.500M37 31H14L21 38" fill="none" stroke="#1a0c0c" strokeWidth={3.600} />
    </svg>
  );
}

const quotes = [
  { label: '今开', value: '2.92', color: COLORS.down, spacing: 1.8 },
  { label: '量比', value: '1.62', color: COLORS.up, spacing: 1.8 },
  { label: '总额', value: '3.79', unit: '亿', color: COLORS.plain, spacing: 2 },
  { label: '最高', value: '2.99', color: COLORS.up, spacing: 1.8 },
  { label: '换手', value: '2.22%', color: COLORS.plain, spacing: 2.8 },
  { label: '总值', value: '167.3', unit: '亿', color: COLORS.plain, small: true, spacing: 1.2 },
  { label: '最低', value: '2.86', color: COLORS.down, spacing: 1.8 },
  { label: '市盈', sup: '动', value: '', unit: '亏损', color: COLORS.plain, spacing: 0 },
  { label: '光伏设备', value: '-1.36%', color: COLORS.down, sector: true, spacing: 3.6 },
];

const infoTabs = ['综评', '资讯', '资金', 'F10', '行业', '基金', '扭亏'];

export default function App() {
  return (
    <Screen>
      <GlobalStyle />
      <StatusBar>
        <Clock>09:54</Clock>
        <AppIcons>
          <AlipayIcon />
          <BrokerIcon />
        </AppIcons>
        <StatusIcons>
          <NetSpeed>
            2.00
            <small>KB/S</small>
          </NetSpeed>
          <Spacer $width={3} />
          <PandaHdIcon />
          <Spacer $width={9} />
          <PandaWifiIcon />
          <Spacer $width={7} />
          <PandaSignalIcon />
          <PandaSignalIcon />
          <BatteryRing />
          <Battery>45%</Battery>
        </StatusIcons>
      </StatusBar>

      <TitleBar>
        <svg width={32} height={58} viewBox="0 0 32 58" fill="none" stroke="#999" strokeWidth={4} strokeLinecap="round" strokeLinejoin="round">
          <path d="M29 3L4 29L29 55" />
        </svg>
        <Spacer $width={228} />
        <svg width={18} height={28} viewBox="0 0 18 28">
          <path d="M18 0V28L0 14Z" fill="#999" />
        </svg>
        <TitleBlock>
          <StockName>协鑫集成</StockName>
          <StockMeta>
            <b>002506</b>
            <MetaBadge>融</MetaBadge>
            <MetaBadge>通</MetaBadge>
            <MetaBadge>L1</MetaBadge>
          </StockMeta>
        </TitleBlock>
        <svg width={18} height={28} viewBox="0 0 18 28">
          <path d="M0 0V28L18 14Z" fill="#999" />
        </svg>
        <Spacer $width={74} />
        <RobotIcon />
        <Spacer $width={50} />
        <svg width={60} height={60} viewBox="0 0 60 60" fill="none" stroke="#999" strokeWidth={4.4} strokeLinecap="round">
          <circle cx={26.5} cy={27.5} r={23.500} />
          <path d="M44 44L55.500 56.500" />
        </svg>
      </TitleBar>

      <Quote>
        <PriceBlock>
          <Price>2.86</Price>
          <Change>-0.11 -3.70%</Change>
        </PriceBlock>
        <QuoteGrid>
          {quotes.map(({ label, sup, value, unit, color, small, sector, spacing }) => (
            <QuoteCell key={label}>
              <QuoteLabel $sector={sector}>
                {label}
                {sup && <sup>{sup}</sup>}
              </QuoteLabel>
              <QuoteValue $color={color} $small={small} $text={!value} $spacing={spacing}>
                {value}
                {unit && <i>{unit}</i>}
              </QuoteValue>
            </QuoteCell>
          ))}
        </QuoteGrid>
        <Corner />
      </Quote>

      <PeriodTabs>
        <PeriodTab>分时</PeriodTab>
        <PeriodTab $active>多日</PeriodTab>
        <PeriodTab>日K</PeriodTab>
        <PeriodTab>周K</PeriodTab>
        <PeriodTab>月K</PeriodTab>
        <PeriodTab>
          周期
          <Caret $color="#ccc" $size={11} />
        </PeriodTab>
        <SettingsCell>
          <svg width={48} height={44} viewBox="0 0 48 44" fill="none" stroke="#999" strokeWidth={3.600} strokeLinejoin="round">
            <path d="M13 2H35L46 22L35 42H13L2 22Z" />
            <circle cx={24} cy={22} r={7.800} />
          </svg>
        </SettingsCell>
      </PeriodTabs>

      <ChartHeader $height={54} $top={6}>
        <Chip $width={120}>
          分时图
          <Caret />
        </Chip>
      </ChartHeader>
      <PriceChart />
      <Dates>
        <span>11/13</span>
        <span>11/14</span>
        <span>11/17</span>
        <span>11/18</span>
        <span>11/19</span>
      </Dates>

      <ChartHeader $height={54} $top={6}>
        <Chip $width={120}>
          成交量
          <Caret />
        </Chip>
        <VolumeText>量3.55万</VolumeText>
        <ExpandButton>
          <svg width={26} height={26} viewBox="0 0 26 26" fill="none" stroke="#999" strokeWidth={2.200}>
            <path d="M2 12V2H12M2 2L11 11M24 14V24H14M24 24L15 15" />
          </svg>
        </ExpandButton>
      </ChartHeader>
      <VolumeChart />

      <ChartHeader $height={54} $top={6}>
        <Chip $width={114}>
          MACD
          <Caret />
        </Chip>
        <Indicator $color="#f0f0f0" $gap={7} $spacing={-0.2}>(12,26,9)</Indicator>
        <Indicator $color="#f0f0f0" $gap={5} $spacing={0.7}>
          DIF:-0.02
          <TrendArrow />
        </Indicator>
        <Indicator $color="#dcd93c" $gap={8} $spacing={0.7}>
          DEA:-0.02
          <TrendArrow />
        </Indicator>
        <Indicator $color="#c23bcd" $gap={9} $spacing={0.7}>
          MACD:-0.01
          <TrendArrow up />
        </Indicator>
      </ChartHeader>
      <MacdChart />

      <Gap />
      <InfoTabs>
        {infoTabs.map((tab, i) => (
          <InfoTab key={tab} $active={i === 0}>
            {tab}
          </InfoTab>
        ))}
      </InfoTabs>
      <Blank />

      <BottomBar>
        <IndexBlock>
          <CaretUp />
          <IndexValue>13079.10</IndexValue>
          <IndexChange>
            深证<b>-0.01%</b>
          </IndexChange>
        </IndexBlock>
        <Action $active>
          <TradeIcon />
          交易
        </Action>
        <Action>
          <svg width={48} height={54} viewBox="0 0 48 54" fill="none" stroke="#999" strokeWidth={3.600} strokeLinejoin="round">
            <path d="M24 2C22 2 21 3.500 21 5C12 7 8 14 8 22V32L3 40C2 42 3 44 5 44H43C45 44 46 42 45 40L40 32V22C40 14 36 7 27 5C27 3.500 26 2 24 2Z" />
            <path d="M17 48H31Q29 54 24 54Q19 54 17 48Z" fill="#999" stroke="none" />
          </svg>
          预警
        </Action>
        <Action>
          <svg width={54} height={54} viewBox="0 0 54 54" fill="none" stroke="#999" strokeWidth={3.600}>
            <circle cx={27} cy={28} r={24} />
            <path d="M14.500 28H40" />
          </svg>
          删自选
        </Action>
        <Action>
          <svg width={48} height={54} viewBox="0 0 48 54" fill="none" stroke="#999" strokeWidth={3.600}>
            <rect x={2} y={5} width={19} height={20} rx={2.500} />
            <rect x={27} y={5} width={19} height={20} rx={2.500} />
            <rect x={2} y={31} width={19} height={20} rx={2.500} />
            <rect x={27} y={31} width={19} height={20} rx={2.500} />
          </svg>
          更多
        </Action>
      </BottomBar>
    </Screen>
  );
}
